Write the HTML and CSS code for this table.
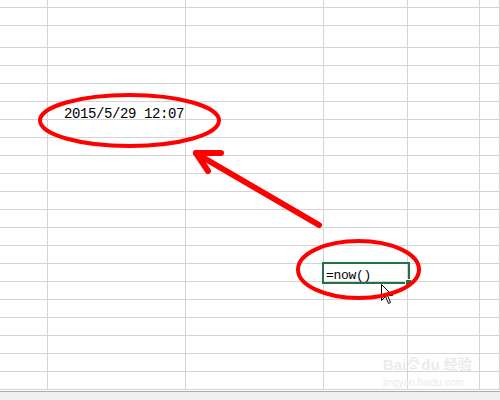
FILE: index.html
```html
<!DOCTYPE html>
<html lang="zh-CN">
<head>
    <meta charset="UTF-8">
    <title>NOW函数</title>
    <link rel="stylesheet" href="styles.css">
</head>
<body>
    <!-- Hoja de cálculo -->
    <div class="sheet">
        <table class="grid">
            <colgroup>
                <col class="c1"><col class="c2"><col class="c3"><col class="c4"><col class="c5"><col class="c6">
            </colgroup>
            <tr class="r-top"><td></td><td></td><td></td><td></td><td></td><td></td></tr>
            <tr><td></td><td></td><td></td><td></td><td></td><td></td></tr>
            <tr class="r-tall"><td></td><td></td><td></td><td></td><td></td><td></td></tr>
            <tr><td></td><td></td><td></td><td></td><td></td><td></td></tr>
            <tr><td></td><td></td><td></td><td></td><td></td><td></td></tr>
            <tr><td></td><td></td><td></td><td></td><td></td><td></td></tr>
            <tr><td></td><td class="date">2015/5/29 12:07</td><td></td><td></td><td></td><td></td></tr>
            <tr><td></td><td></td><td></td><td></td><td></td><td></td></tr>
            <tr><td></td><td></td><td></td><td></td><td></td><td></td></tr>
            <tr><td></td><td></td><td></td><td></td><td></td><td></td></tr>
            <tr><td></td><td></td><td></td><td></td><td></td><td></td></tr>
            <tr><td></td><td></td><td></td><td></td><td></td><td></td></tr>
            <tr><td></td><td></td><td></td><td></td><td></td><td></td></tr>
            <tr><td></td><td></td><td></td><td></td><td></td><td></td></tr>
            <tr><td></td><td></td><td></td><td></td><td></td><td></td></tr>
            <tr><td></td><td></td><td></td><td class="formula">=now()<span class="sel"><span class="handle"></span></span></td><td></td><td></td></tr>
            <tr><td></td><td></td><td></td><td></td><td></td><td></td></tr>
            <tr><td></td><td></td><td></td><td></td><td></td><td></td></tr>
            <tr><td></td><td></td><td></td><td></td><td></td><td></td></tr>
            <tr><td></td><td></td><td></td><td></td><td></td><td></td></tr>
            <tr><td></td><td></td><td></td><td></td><td></td><td></td></tr>
            <tr><td></td><td></td><td></td><td></td><td></td><td></td></tr>
        </table>

        <!-- Puntero del ratón -->
        <svg class="cursor" width="13" height="21" viewBox="0 0 13 21">
            <path d="M0.5 0.5 L0.5 16.5 L4.5 12.5 L7.5 19.5 L9.5 18.5 L6.5 11.5 L11.5 11.5 Z" fill="#fff" stroke="#000" stroke-width="1"/>
        </svg>

        <!-- Anotaciones en rojo -->
        <svg class="marks" width="500" height="391" viewBox="0 0 500 391">
            <ellipse cx="129.5" cy="120.5" rx="89.5" ry="25.5" fill="none" stroke="#f00" stroke-width="4"/>
            <ellipse cx="358.5" cy="269.5" rx="60.5" ry="28.5" fill="none" stroke="#f00" stroke-width="4"/>
            <g stroke="#f00" stroke-width="6" stroke-linecap="round" fill="none">
                <line x1="197" y1="154" x2="319" y2="225"/>
                <line x1="196" y1="153" x2="221" y2="153"/>
                <line x1="196" y1="153" x2="208" y2="171"/>
            </g>
        </svg>

        <!-- Marca de agua -->
        <div class="watermark">
            <div class="wm-logo">Bai<svg class="paw" width="13" height="13" viewBox="0 0 16 16"><g fill="none" stroke="#e2e2e2" stroke-width="1.2"><circle cx="3" cy="7" r="2"/><circle cx="6" cy="3" r="2"/><circle cx="10" cy="3" r="2"/><circle cx="13" cy="7" r="2"/><path d="M4 14 Q8 6 12 14 Z"/></g></svg>du<span class="wm-cn">经验</span></div>
            <div class="wm-url">jingyan.baidu.com</div>
        </div>
    </div>

    <div class="status"></div>
</body>
</html>
```

FILE: styles.css
```css
/* Página base */
body {
    margin: 0;
    background: #fff;
    width: 500px;
    height: 400px;
    overflow: hidden;
    font-family: "Liberation Mono", "Noto Sans CJK SC", monospace;
}

.sheet {
    position: relative;
    height: 391px;
    overflow: hidden;
}

/* Cuadrícula */
.grid {
    border-collapse: separate;
    border-spacing: 0;
    table-layout: fixed;
    width: 500px;
}

.c1 { width: 48px; }
.c2 { width: 138px; }
.c3 { width: 138px; }
.c4 { width: 84px; }
.c5 { width: 72px; }
.c6 { width: 20px; }

.grid td {
    box-sizing: border-box;
    height: 18px;
    padding: 0;
    border-right: 1px solid #d4d4d4;
    border-bottom: 1px solid #d4d4d4;
    font-size: 14px;
    line-height: 15px;
    vertical-align: bottom;
    white-space: nowrap;
    color: #000;
}

.grid .r-top td { height: 8px; }
.grid .r-tall td { height: 22px; }

.date {
    text-align: right;
    padding-right: 1px !important;
    letter-spacing: -0.4px;
    line-height: 10px !important;
}

.formula {
    position: relative;
    padding-left: 2px !important;
    font-size: 13px !important;
    line-height: 11px !important;
    letter-spacing: -0.3px;
}

/* Celda seleccionada */
.sel {
    position: absolute;
    left: -2px;
    top: -2px;
    width: 88px;
    height: 22px;
    box-sizing: border-box;
    border: 2px solid #217346;
}

.handle {
    position: absolute;
    right: -3px;
    bottom: -3px;
    width: 5px;
    height: 5px;
    background: #217346;
    border-left: 1px solid #fff;
    border-top: 1px solid #fff;
}

.cursor {
    position: absolute;
    left: 381px;
    top: 284px;
}

.marks {
    position: absolute;
    left: 0;
    top: 0;
}

/* Marca de agua de Baidu */
.watermark {
    position: absolute;
    left: 383px;
    top: 356px;
    color: #ebebeb;
    font-family: "Liberation Sans", "Noto Sans CJK SC", sans-serif;
}

.wm-logo {
    font-size: 15px;
    font-weight: bold;
    line-height: 17px;
    display: flex;
    align-items: flex-end;
}

.paw { margin: 0 1px 3px; }

.wm-cn {
    font-size: 14px;
    margin-left: 4px;
}

.wm-url {
    font-size: 10px;
    line-height: 11px;
    margin-top: 4px;
}

/* Barra inferior */
.status {
    height: 9px;
    border-top: 1px solid #ababab;
    background: #f0f0f0;
}
```
